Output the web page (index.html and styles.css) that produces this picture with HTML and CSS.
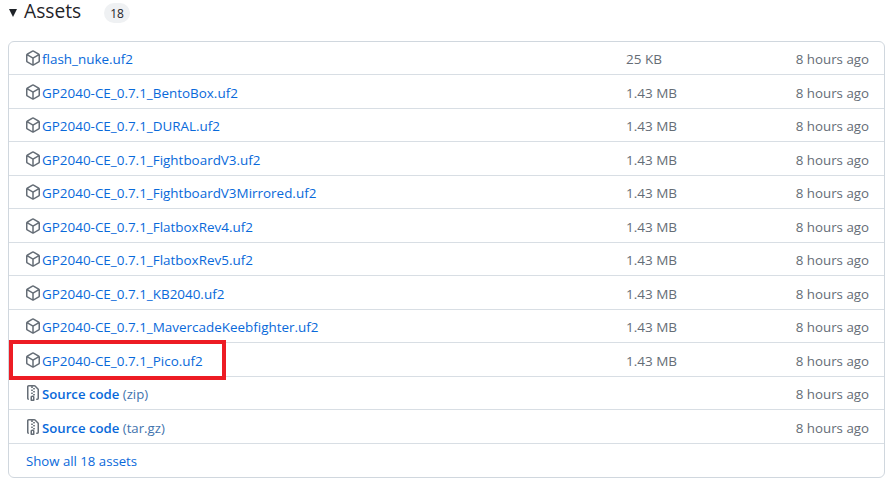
FILE: index.html
```html
<!DOCTYPE html>
<html lang="en">
<head>
<meta charset="utf-8">
<title>Assets</title>
<link rel="stylesheet" href="styles.css">
</head>
<body>
<svg class="defs" width="0" height="0" aria-hidden="true">
  <symbol id="pkg" viewBox="0 0 16 16"><path d="m8.878.392 5.25 3.045c.54.314.872.89.872 1.514v6.098a1.75 1.75 0 0 1-.872 1.514l-5.25 3.045a1.75 1.75 0 0 1-1.756 0l-5.25-3.045A1.75 1.75 0 0 1 1 11.049V4.951c0-.624.332-1.201.872-1.514L7.122.392a1.75 1.75 0 0 1 1.756 0ZM7.875 1.69l-4.63 2.685L8 7.133l4.755-2.758-4.63-2.685a.248.248 0 0 0-.25 0ZM2.5 5.677v5.372c0 .09.047.171.125.216l4.625 2.683V8.432Zm6.25 8.271 4.625-2.683a.25.25 0 0 0 .125-.216V5.677L8.75 8.432Z"/></symbol>
  <symbol id="zip" viewBox="0 0 16 16"><path d="M3.5 1.75v11.5c0 .09.048.173.126.217a.75.75 0 0 1-.752 1.298A1.748 1.748 0 0 1 2 13.25V1.75C2 .784 2.784 0 3.75 0h5.586c.464 0 .909.185 1.237.513l2.914 2.914c.329.328.513.773.513 1.237v8.586A1.75 1.75 0 0 1 12.25 15h-.5a.75.75 0 0 1 0-1.5h.5a.25.25 0 0 0 .25-.25V4.664a.25.25 0 0 0-.073-.177L9.513 1.573a.25.25 0 0 0-.177-.073H7.25a.75.75 0 0 1 0 1.5h-.5a.75.75 0 0 1 0-1.5h-3a.25.25 0 0 0-.25.25Zm3.75 8.75h.5c.966 0 1.75.784 1.75 1.75v3a.75.75 0 0 1-.75.75h-2.5a.75.75 0 0 1-.75-.75v-3c0-.966.784-1.75 1.75-1.75ZM6 5.25a.75.75 0 0 1 .75-.75h.5a.75.75 0 0 1 0 1.5h-.5A.75.75 0 0 1 6 5.25Zm.75 2.25h.5a.75.75 0 0 1 0 1.5h-.5a.75.75 0 0 1 0-1.5ZM8 6.75A.75.75 0 0 1 8.75 6h.5a.75.75 0 0 1 0 1.5h-.5A.75.75 0 0 1 8 6.75ZM8.75 3h.5a.75.75 0 0 1 0 1.5h-.5a.75.75 0 0 1 0-1.5ZM8 9.75A.75.75 0 0 1 8.75 9h.5a.75.75 0 0 1 0 1.5h-.5A.75.75 0 0 1 8 9.75Zm-1 2.5v2.25h1v-2.25a.25.25 0 0 0-.25-.25h-.5a.25.25 0 0 0-.25.25Z"/></symbol>
</svg>
<header class="head">
  <span class="caret"></span>
  <h2 class="title">Assets</h2>
  <span class="count">18</span>
</header>
<main class="box">
  <div class="row"><div class="name"><svg class="ico"><use href="#pkg"/></svg><a href="#">flash_nuke.uf2</a></div><span class="size">25 KB</span><span class="time">8 hours ago</span></div>
  <div class="row"><div class="name"><svg class="ico"><use href="#pkg"/></svg><a href="#">GP2040-CE_0.7.1_BentoBox.uf2</a></div><span class="size">1.43 MB</span><span class="time">8 hours ago</span></div>
  <div class="row"><div class="name"><svg class="ico"><use href="#pkg"/></svg><a href="#">GP2040-CE_0.7.1_DURAL.uf2</a></div><span class="size">1.43 MB</span><span class="time">8 hours ago</span></div>
  <div class="row"><div class="name"><svg class="ico"><use href="#pkg"/></svg><a href="#">GP2040-CE_0.7.1_FightboardV3.uf2</a></div><span class="size">1.43 MB</span><span class="time">8 hours ago</span></div>
  <div class="row"><div class="name"><svg class="ico"><use href="#pkg"/></svg><a href="#">GP2040-CE_0.7.1_FightboardV3Mirrored.uf2</a></div><span class="size">1.43 MB</span><span class="time">8 hours ago</span></div>
  <div class="row"><div class="name"><svg class="ico"><use href="#pkg"/></svg><a href="#">GP2040-CE_0.7.1_FlatboxRev4.uf2</a></div><span class="size">1.43 MB</span><span class="time">8 hours ago</span></div>
  <div class="row"><div class="name"><svg class="ico"><use href="#pkg"/></svg><a href="#">GP2040-CE_0.7.1_FlatboxRev5.uf2</a></div><span class="size">1.43 MB</span><span class="time">8 hours ago</span></div>
  <div class="row"><div class="name"><svg class="ico"><use href="#pkg"/></svg><a href="#">GP2040-CE_0.7.1_KB2040.uf2</a></div><span class="size">1.43 MB</span><span class="time">8 hours ago</span></div>
  <div class="row"><div class="name"><svg class="ico"><use href="#pkg"/></svg><a href="#">GP2040-CE_0.7.1_MavercadeKeebfighter.uf2</a></div><span class="size">1.43 MB</span><span class="time">8 hours ago</span></div>
  <div class="row"><div class="name"><svg class="ico"><use href="#pkg"/></svg><a href="#">GP2040-CE_0.7.1_Pico.uf2</a></div><span class="size">1.43 MB</span><span class="time">8 hours ago</span></div>
  <div class="row"><div class="name"><svg class="ico"><use href="#zip"/></svg><a class="src" href="#">Source code <span class="ext">(zip)</span></a></div><span class="size"></span><span class="time">8 hours ago</span></div>
  <div class="row"><div class="name"><svg class="ico"><use href="#zip"/></svg><a class="src" href="#">Source code <span class="ext">(tar.gz)</span></a></div><span class="size"></span><span class="time">8 hours ago</span></div>
  <div class="row row-last"><a class="all" href="#">Show all 18 assets</a></div>
</main>
<div class="mark"></div>
</body>
</html>
```
FILE: styles.css
```css
* { box-sizing: border-box; }
html, body { margin: 0; height: 484px; overflow: hidden; background: #fff; }
body {
  position: relative;
  padding: 0 7px 0 8px;
  font-family: "Open Sans", "Noto Sans", sans-serif;
  font-size: 13.3px;
  color: #1f2328;
}
.defs { position: absolute; }
.head { display: flex; align-items: flex-start; height: 24px; margin-bottom: 17px; }
.caret {
  width: 0; height: 0; margin: 9px 7px 0 1px;
  border-left: 4.5px solid transparent;
  border-right: 4.5px solid transparent;
  border-top: 8px solid #1f2328;
}
.title { margin: 0 23px 0 0; font-size: 19.2px; font-weight: 500; line-height: 22px; width: 57px; white-space: nowrap; }
.count {
  display: flex; align-items: center; justify-content: center;
  width: 26px; height: 20px; margin-top: 3px; border-radius: 10px;
  background: #eff1f3; font-size: 12px; font-weight: 500;
}
.box {
  display: grid; grid-template-rows: repeat(13, 1fr);
  height: 437px; border: 1px solid #d0d7de; border-radius: 6px;
}
.row {
  display: flex; align-items: center; padding: 2.5px 15px 0 17px;
  border-bottom: 1px solid #d8dee4; min-height: 0;
}
.row-last { border-bottom: 0; padding-top: 1px; }
.name { display: flex; align-items: center; flex: 1; min-width: 0; }
.ico { width: 16px; height: 16px; margin: -2px 0 0 -1px; fill: #656d76; fill-rule: evenodd; flex: none; }
a { color: #0969da; text-decoration: none; white-space: nowrap; }
.name a { font-size: 13.45px; font-weight: 500; margin-left: 1px; }
.name .src { font-size: 13.2px; font-weight: 600; }
.ext { font-weight: 400; color: #4273ad; }
.size { width: 169px; font-size: 13.5px; color: #656d76; }
.time { width: 74px; text-align: right; color: #656d76; white-space: nowrap; }
.all { font-size: 13.2px; }
.mark {
  position: absolute; left: 9px; top: 340px; width: 217px; height: 40px;
  border: 4px solid #ed1c24;
}
```
